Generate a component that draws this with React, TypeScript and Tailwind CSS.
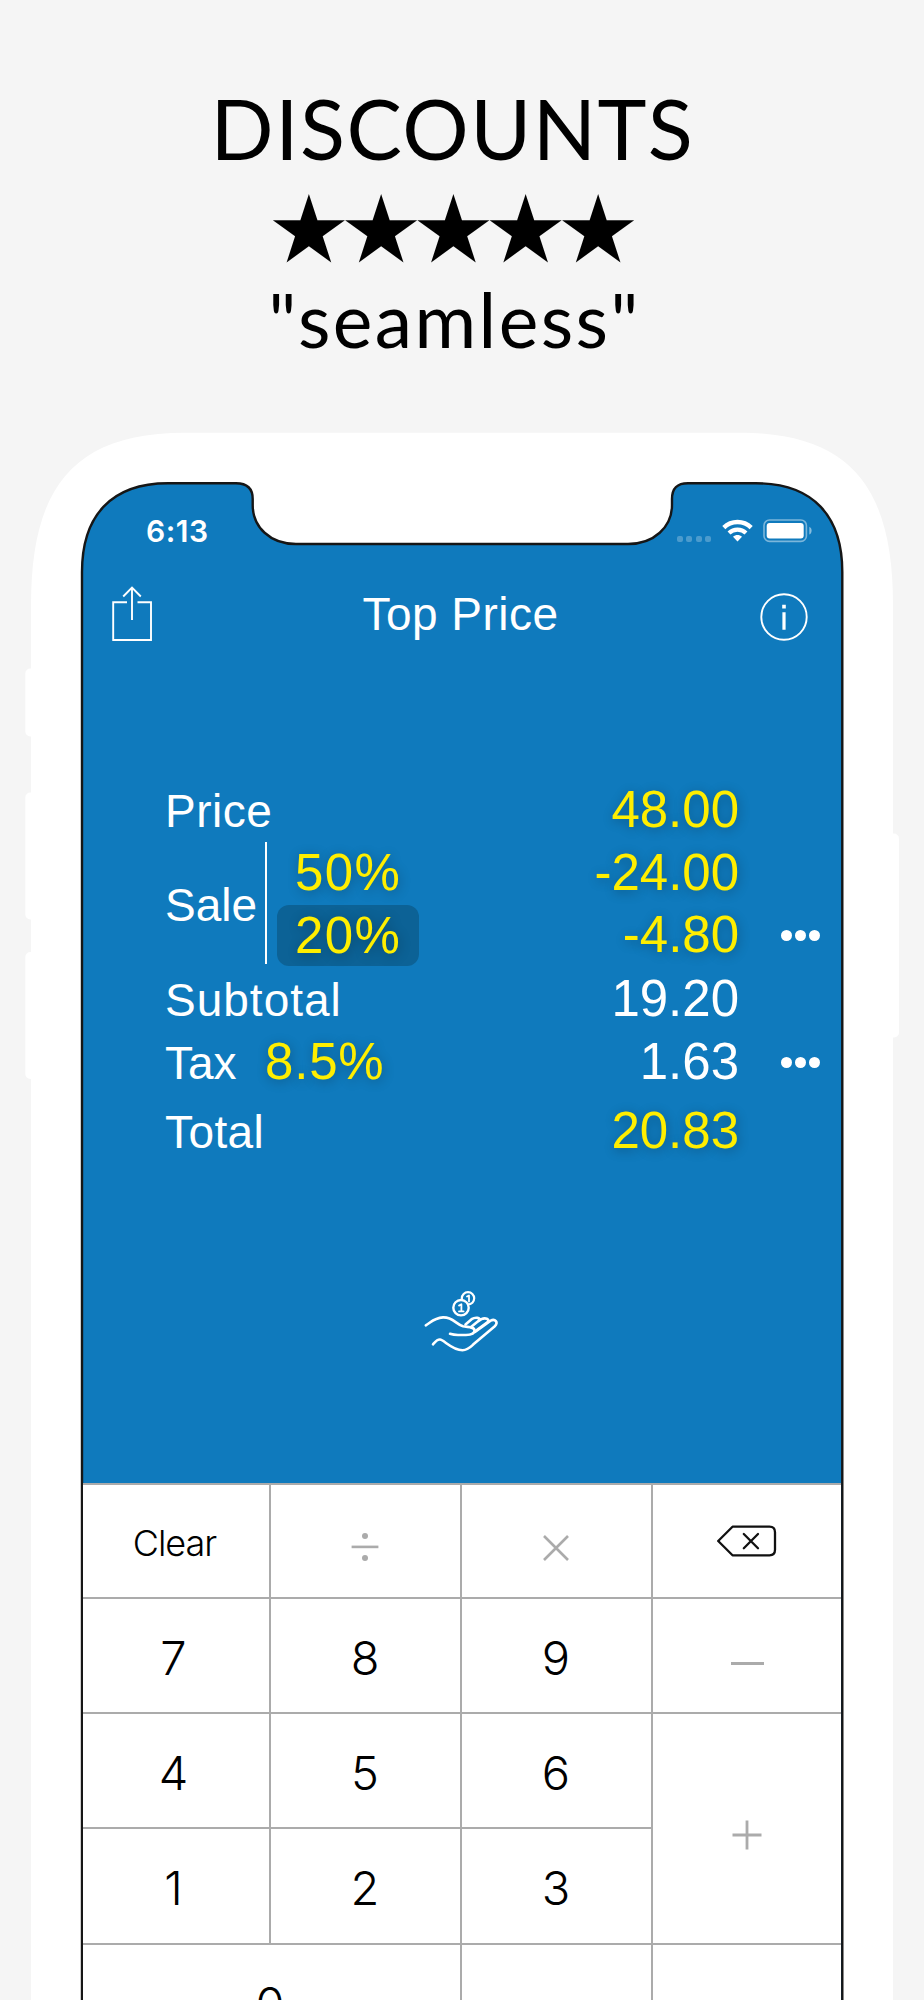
import React from "react";

interface KeyProps {
  children?: React.ReactNode;
  className?: string;
}

const PhoneFrame: React.FC = () => (
  <svg
    className="absolute inset-0"
    width="924"
    height="2000"
    viewBox="0 0 924 2000"
    aria-hidden="true"
  >
    {/* side buttons */}
    <g fill="#ffffff">
      <rect x="25.3" y="668.5" width="20" height="68" rx="5" />
      <rect x="25.3" y="792.5" width="20" height="127" rx="5" />
      <rect x="25.3" y="952" width="20" height="127" rx="5" />
      <rect x="879" y="833.5" width="20" height="204" rx="5" />
    </g>
    {/* body */}
    <path
      d="M31 2010V605C31 488 73 432.7 185 432.7H739C851 432.7 893 488 893 605V2010Z"
      fill="#ffffff"
    />
    {/* screen with notch */}
    <path
      d="M82 2010V572C82 516 111 483.3 168 483.3H236C247 483.3 252.7 488 252.7 499V505C252.7 527 270 544 296 544H628C654 544 672 527 672 505V499C672 488 677 483.3 688 483.3H756C813 483.3 842.3 516 842.3 572V2010Z"
      fill="#0f7abd"
      stroke="#161616"
      strokeWidth="2.4"
    />
  </svg>
);

const ShareIcon: React.FC = () => (
  <svg width="42" height="58" viewBox="0 0 42 58" fill="none" stroke="#ffffff" strokeWidth="1.9">
    <path d="M16 18.2H2.2V56H40V18.2H26.5" />
    <path d="M21 36V4M12.2 12.5L21 3.7L29.8 12.5" />
  </svg>
);

const InfoIcon: React.FC = () => (
  <svg width="48" height="48" viewBox="0 0 48 48" fill="none">
    <circle cx="24" cy="24" r="22.7" stroke="#ffffff" strokeWidth="1.9" />
    <path d="M22.2 11.7h3.6v3.8h-3.6zM22.4 19.2h3.2v17.5h-3.2z" fill="#ffffff" />
  </svg>
);

const WifiIcon: React.FC = () => (
  <svg width="31" height="23" viewBox="0 0 31 23" fill="none" stroke="#ffffff">
    <path d="M1.8 8.6C9.4 1.2 21.6 1.2 29.2 8.6" strokeWidth="4.4" />
    <path d="M7 14C11.8 9.5 19.2 9.5 24 14" strokeWidth="4.2" />
    <path d="M15.5 22.4L11 17.8C13.6 15.5 17.4 15.5 20 17.8Z" fill="#ffffff" stroke="none" />
  </svg>
);

const BatteryIcon: React.FC = () => (
  <svg width="50" height="24" viewBox="0 0 50 24" fill="none">
    <rect x="1" y="1" width="42.4" height="21.4" rx="5.5" stroke="#ffffff" strokeOpacity="0.45" strokeWidth="1.6" />
    <rect x="3.7" y="3.9" width="37" height="15.6" rx="3" fill="#ffffff" />
    <path d="M46.3 7.8C49.4 9 49.4 14.4 46.3 15.6Z" fill="#ffffff" fillOpacity="0.5" />
  </svg>
);

const HandCoinsIcon: React.FC = () => (
  <svg
    width="76"
    height="62"
    viewBox="0 0 76 62"
    fill="none"
    stroke="#ffffff"
    strokeWidth="2.6"
    strokeLinecap="round"
    strokeLinejoin="round"
  >
    <circle cx="44" cy="8.3" r="6.2" strokeWidth="2.2" />
    <path d="M43 6.6L45 5.4V11.5" strokeWidth="1.8" />
    <circle cx="37" cy="17.7" r="7.7" fill="#0f7abd" strokeWidth="2.4" />
    <path d="M35 15.6L37.4 14.2V21M35 21.4H39.6" strokeWidth="1.8" />
    <path d="M1.8 35.3C7 32.3 10 28 19 27.4C29 27 31.5 34 39 36.2C43.5 37.4 50.5 36.2 50.5 40.6C50.5 44.8 46 45 42 45H34C31 45 28.5 44.6 26 43.8" />
    <path d="M9 54.3C11.5 51.5 13 49.3 16 49.5C20 49.8 28 60.2 38.5 60.2C44 60.2 46.5 57 50 53.8L70.5 36.5C75 32 71 28.6 66.6 30.6L51 42" />
    <path d="M41.5 34.4L47.6 29.2C51 27 57.5 27.4 55 30.6L47 37M54 31.4L57.4 29.2C61 27.4 66.4 28.8 63.4 32.2L51.5 41" />
  </svg>
);

const BackspaceIcon: React.FC = () => (
  <svg
    width="60"
    height="32"
    viewBox="0 0 60 32"
    fill="none"
    stroke="#111111"
    strokeWidth="2.3"
    strokeLinecap="round"
    strokeLinejoin="round"
  >
    <path d="M15.5 1.7H52.5Q58 1.7 58 7.2V24.8Q58 30.3 52.5 30.3H15.5L1.2 16Z" />
    <path d="M26.8 9L41 23.2M41 9L26.8 23.2" />
  </svg>
);

const MoreDots: React.FC = () => (
  <div className="flex gap-[3px]">
    <span className="size-[11px] rounded-full bg-white" />
    <span className="size-[11px] rounded-full bg-white" />
    <span className="size-[11px] rounded-full bg-white" />
  </div>
);

const Key: React.FC<KeyProps> = ({ children, className = "" }) => (
  <div className={`flex items-center justify-center bg-white ${className}`}>{children}</div>
);

const glow = "text-[#ffee00] [text-shadow:1px_2px_12px_rgba(0,0,0,0.3)]";

const App: React.FC = () => {
  return (
    <main className="relative h-[2000px] w-[924px] overflow-hidden bg-[#f5f5f5] font-['Liberation_Sans',sans-serif]">
      <PhoneFrame />

      <div className="relative flex h-full flex-col">
        <header className="flex h-[483px] flex-col items-center pr-[18px] pt-[78px] font-['Lato',sans-serif] text-black">
          <h1 className="pr-[1px] text-[83px] leading-[100px] tracking-[1.5px] whitespace-nowrap">DISCOUNTS</h1>
          <p className="h-[96px] pt-[4px] pr-[11px] font-['DejaVu_Sans',sans-serif] text-[94px] leading-[95px] tracking-[-12px] whitespace-nowrap">
            ★★★★★
          </p>
          <p className="pl-[3px] text-[75px] leading-[90px] tracking-[2.4px] whitespace-nowrap">"seamless"</p>
        </header>

        <section className="ml-[83px] w-[758px] text-white">
          {/* status bar */}
          <div className="flex h-[95px] items-center justify-between pl-[63px] pr-[28px]">
            <span className="font-['Inter',sans-serif] text-[30px] font-semibold leading-none tracking-[0.5px]">6:13</span>
            <div className="flex items-center">
              <div className="mt-4 mr-[11px] flex gap-[3.4px]">
                <span className="size-[6px] rounded-[2px] bg-white/25" />
                <span className="size-[6px] rounded-[2px] bg-white/25" />
                <span className="size-[6px] rounded-[2px] bg-white/25" />
                <span className="size-[6px] rounded-[2px] bg-white/25" />
              </div>
              <WifiIcon />
              <div className="ml-[10px]">
                <BatteryIcon />
              </div>
            </div>
          </div>

          {/* nav bar */}
          <nav className="flex h-[72px] items-center justify-between pl-[28px] pr-[33px]">
            <div className="pb-[3px]">
              <ShareIcon />
            </div>
            <h2 className="pl-[8px] text-[46px] leading-none tracking-[0.5px]">Top Price</h2>
            <div className="pt-[6px]">
              <InfoIcon />
            </div>
          </nav>

          {/* price breakdown */}
          <div className="mt-[129px] pl-[82px] text-[46px] leading-[62.7px]">
            <div className="flex w-[574px] items-baseline justify-between">
              <span className="tracking-[0.5px]">Price</span>
              <span className={`text-[51px] ${glow}`}>48.00</span>
            </div>
            <div className="-mt-[1px] flex">
              <div className="flex items-center">
                <span className="pt-[2px]">Sale</span>
              </div>
              <div className="ml-[8px] h-[122px] w-[2px] bg-white" />
              <div className="ml-[10px] w-[142px] text-[51px]">
                <div className={`pl-[18px] tracking-[1.3px] ${glow}`}>50%</div>
                <div className={`mt-[1px] h-[61px] rounded-xl bg-[#0c6296] pl-[18px] tracking-[1.3px] ${glow}`}>20%</div>
              </div>
              <div className={`w-[320px] text-right text-[51px] ${glow}`}>
                <div>-24.00</div>
                <div>-4.80</div>
              </div>
              <div className="flex flex-col justify-end pb-[26px] pl-[42px]">
                <MoreDots />
              </div>
            </div>
            <div className="mt-[1px] flex w-[574px] items-baseline justify-between">
              <span className="tracking-[1px]">Subtotal</span>
              <span className="text-[51px]">19.20</span>
            </div>
            <div className="-mt-[1px] flex items-center">
              <div className="flex w-[574px] items-baseline">
                <span className="w-[100px]">Tax</span>
                <span className={`text-[51px] tracking-[0.8px] ${glow}`}>8.5%</span>
                <span className="ml-auto text-[51px]">1.63</span>
              </div>
              <div className="mb-[1px] ml-[42px]">
                <MoreDots />
              </div>
            </div>
            <div className="mt-[5px] flex w-[574px] items-baseline justify-between">
              <span className="tracking-[0.4px]">Total</span>
              <span className={`text-[51px] ${glow}`}>20.83</span>
            </div>
          </div>

          <div className="mt-[127px] flex justify-center">
            <HandCoinsIcon />
          </div>
        </section>

        {/* keypad */}
        <section className="mt-auto ml-[83px] grid h-[517px] w-[758px] grid-cols-[186px_189px_189px_188px] grid-rows-[112px_113px_113px_114px_113px] gap-[2px] overflow-hidden border-t-2 border-[#ababab] bg-[#ababab] font-['Inter',sans-serif] text-[47px] font-light text-black">
          <Key className="pt-[3px] pr-[3px] text-[36px] tracking-[-1px]">Clear</Key>
          <Key>
            <svg width="28" height="28" viewBox="0 0 28 28" className="mt-[11px] mr-[2px]" fill="#ababab">
              <circle cx="14" cy="3" r="3" />
              <rect x="0.6" y="12.6" width="26.8" height="2.6" />
              <circle cx="14" cy="25" r="3" />
            </svg>
          </Key>
          <Key>
            <svg width="28" height="28" viewBox="0 0 28 28" className="mt-[14px] mr-[2px]" stroke="#ababab" strokeWidth="2.6">
              <path d="M2 2L26 26M26 2L2 26" />
            </svg>
          </Key>
          <Key>
            <BackspaceIcon />
          </Key>
          <Key className="pt-[5px] pr-[5px]">7</Key>
          <Key className="pt-[5px] pr-[1px]">8</Key>
          <Key className="pt-[5px] pr-[1px]">9</Key>
          <Key>
            <span className="mt-[15px] h-[3px] w-[33px] bg-[#ababab]" />
          </Key>
          <Key className="pt-[5px] pr-[5px]">4</Key>
          <Key className="pt-[5px] pr-[1px]">5</Key>
          <Key className="pt-[5px] pr-[1px]">6</Key>
          <Key className="row-span-2">
            <svg width="30" height="30" viewBox="0 0 30 30" className="mt-[12px]" stroke="#ababab" strokeWidth="2.8">
              <path d="M15 0.5V29.5M0.5 15H29.5" />
            </svg>
          </Key>
          <Key className="pt-[5px] pr-[5px]">1</Key>
          <Key className="pt-[5px] pr-[1px]">2</Key>
          <Key className="pt-[5px] pr-[1px]">3</Key>
          <Key className="col-span-2 pt-[5px] pr-[3px]">0</Key>
          <Key />
          <Key />
        </section>
      </div>
    </main>
  );
};

export default App;
